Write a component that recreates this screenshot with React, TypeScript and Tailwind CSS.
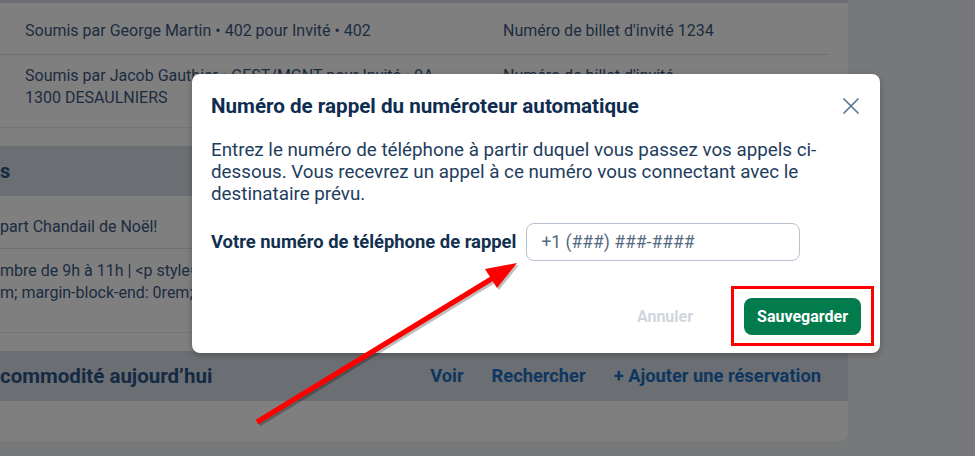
import { X } from "lucide-react";

function Row({ left, right, className }: { left: React.ReactNode; right: React.ReactNode; className: string }) {
  return (
    <div className={`mr-[18px] grid grid-cols-[503px_1fr] border-b border-[#707173] text-[16px] leading-[22px] text-[#1c2c40] ${className}`}>
      <div className="pl-[25px]">{left}</div>
      <div>{right}</div>
    </div>
  );
}

export default function App() {
  return (
    <div className="relative h-[456px] w-[975px] overflow-hidden bg-[#77787a] font-['Roboto',sans-serif]">
      {/* page behind the overlay */}
      <div className="flex w-[848px] flex-col rounded-br-lg bg-[#7f7f7f]">
        <div className="h-[3px] bg-[#6b6e72]" />
        <Row className="pt-[17px] pb-[12px]" left="Soumis par George Martin • 402 pour Invité • 402" right="Numéro de billet d'invité 1234" />
        <div className="grid grid-cols-[503px_1fr] border-b border-[#737476] pt-[10px] pb-[18px] text-[16px] leading-[22px] text-[#1c2c40]">
          <div className="pl-[25px] whitespace-nowrap">
            Soumis par Jacob Gauthier • GEST/MGNT pour Invité • 9A
            <br />
            1300 DESAULNIERS
          </div>
          <div>Numéro de billet d'invité</div>
        </div>
        <div className="h-[18px]" />

        <div className="flex h-[50px] items-center bg-[#6b6e72] text-[20px] font-bold text-[#142a44]">s</div>
        <div className="mr-[18px] border-b border-[#707173] pt-[20px] pb-[10px] text-[16px] leading-[22px] text-[#1c2c40]">part Chandail de Noël!</div>
        <div className="border-b border-[#757678] pt-[11px] pb-[28px] text-[16px] leading-[22px] text-[#1c2c40]">
          mbre de 9h à 11h | &lt;p style=&quot;margin-block-start: 0rem;
          <br />
          m; margin-block-end: 0rem; line-height: 1.5;&quot;&gt;
        </div>
        <div className="h-[18px]" />

        <div className="flex h-[50px] items-center justify-between bg-[#6b6e72] pr-[27px]">
          <span className="text-[20.5px] font-bold text-[#142a44]">commodité aujourd’hui</span>
          <div className="flex gap-[28px] text-[18.3px] font-bold text-[#0d3660]">
            <span>Voir</span>
            <span>Rechercher</span>
            <span>+ Ajouter une réservation</span>
          </div>
        </div>
        <div className="h-[40px] rounded-br-lg" />
      </div>

      {/* dialog */}
      <div className="absolute top-[74px] left-[192px] flex w-[688px] flex-col rounded-lg bg-white px-[19px] pt-[18px] pb-[18px] shadow-[0_2px_6px_rgba(0,0,0,0.25)]">
        <div className="flex items-center justify-between">
          <h2 className="text-[20.6px] leading-[28px] font-bold text-[#0f2d50]">Numéro de rappel du numéroteur automatique</h2>
          <X className="-mr-[4px] h-[28px] w-[28px] text-[#5d7893]" strokeWidth={1.5} />
        </div>
        <p className="mt-[19px] pr-[20px] text-[18.8px] leading-[22px] text-[#1e3d5e]">
          Entrez le numéro de téléphone à partir duquel vous passez vos appels ci-dessous. Vous recevrez un appel à ce numéro vous connectant avec le destinataire prévu.
        </p>
        <div className="mt-[18px] flex items-center gap-[10px]">
          <label className="text-[18.4px] font-bold text-[#12304f]">Votre numéro de téléphone de rappel</label>
          <input
            className="h-[38px] w-[274px] rounded-lg border border-[#b7c3cf] px-[14px] text-[17.5px] text-[#1e3d5e] outline-none placeholder:text-[#55697f]"
            placeholder="+1 (###) ###-####"
          />
        </div>
        <div className="mt-[37px] flex items-center justify-end">
          <button className="mr-[51px] text-[16px] font-bold text-[#d1d6dd]">Annuler</button>
          <div className="relative">
            <button className="h-[37px] rounded-lg bg-[#037c4d] px-[13px] text-[16px] font-bold text-white">Sauvegarder</button>
            <div className="absolute -top-[12px] -right-[13px] -bottom-[11px] -left-[13px] border-[3px] border-[#ff0000]" />
          </div>
        </div>
      </div>

      {/* annotation arrow */}
      <svg className="pointer-events-none absolute inset-0" width="975" height="456">
        <g transform="translate(2 2)" opacity="0.25">
          <line x1="257" y1="422" x2="493" y2="278" stroke="#000" strokeWidth="5" />
          <polygon points="517,263 485,269 497,288" fill="#000" />
        </g>
        <line x1="257" y1="422" x2="493" y2="278" stroke="#ff0000" strokeWidth="5" />
        <polygon points="517,263 485,269 497,288" fill="#ff0000" />
      </svg>
    </div>
  );
}
